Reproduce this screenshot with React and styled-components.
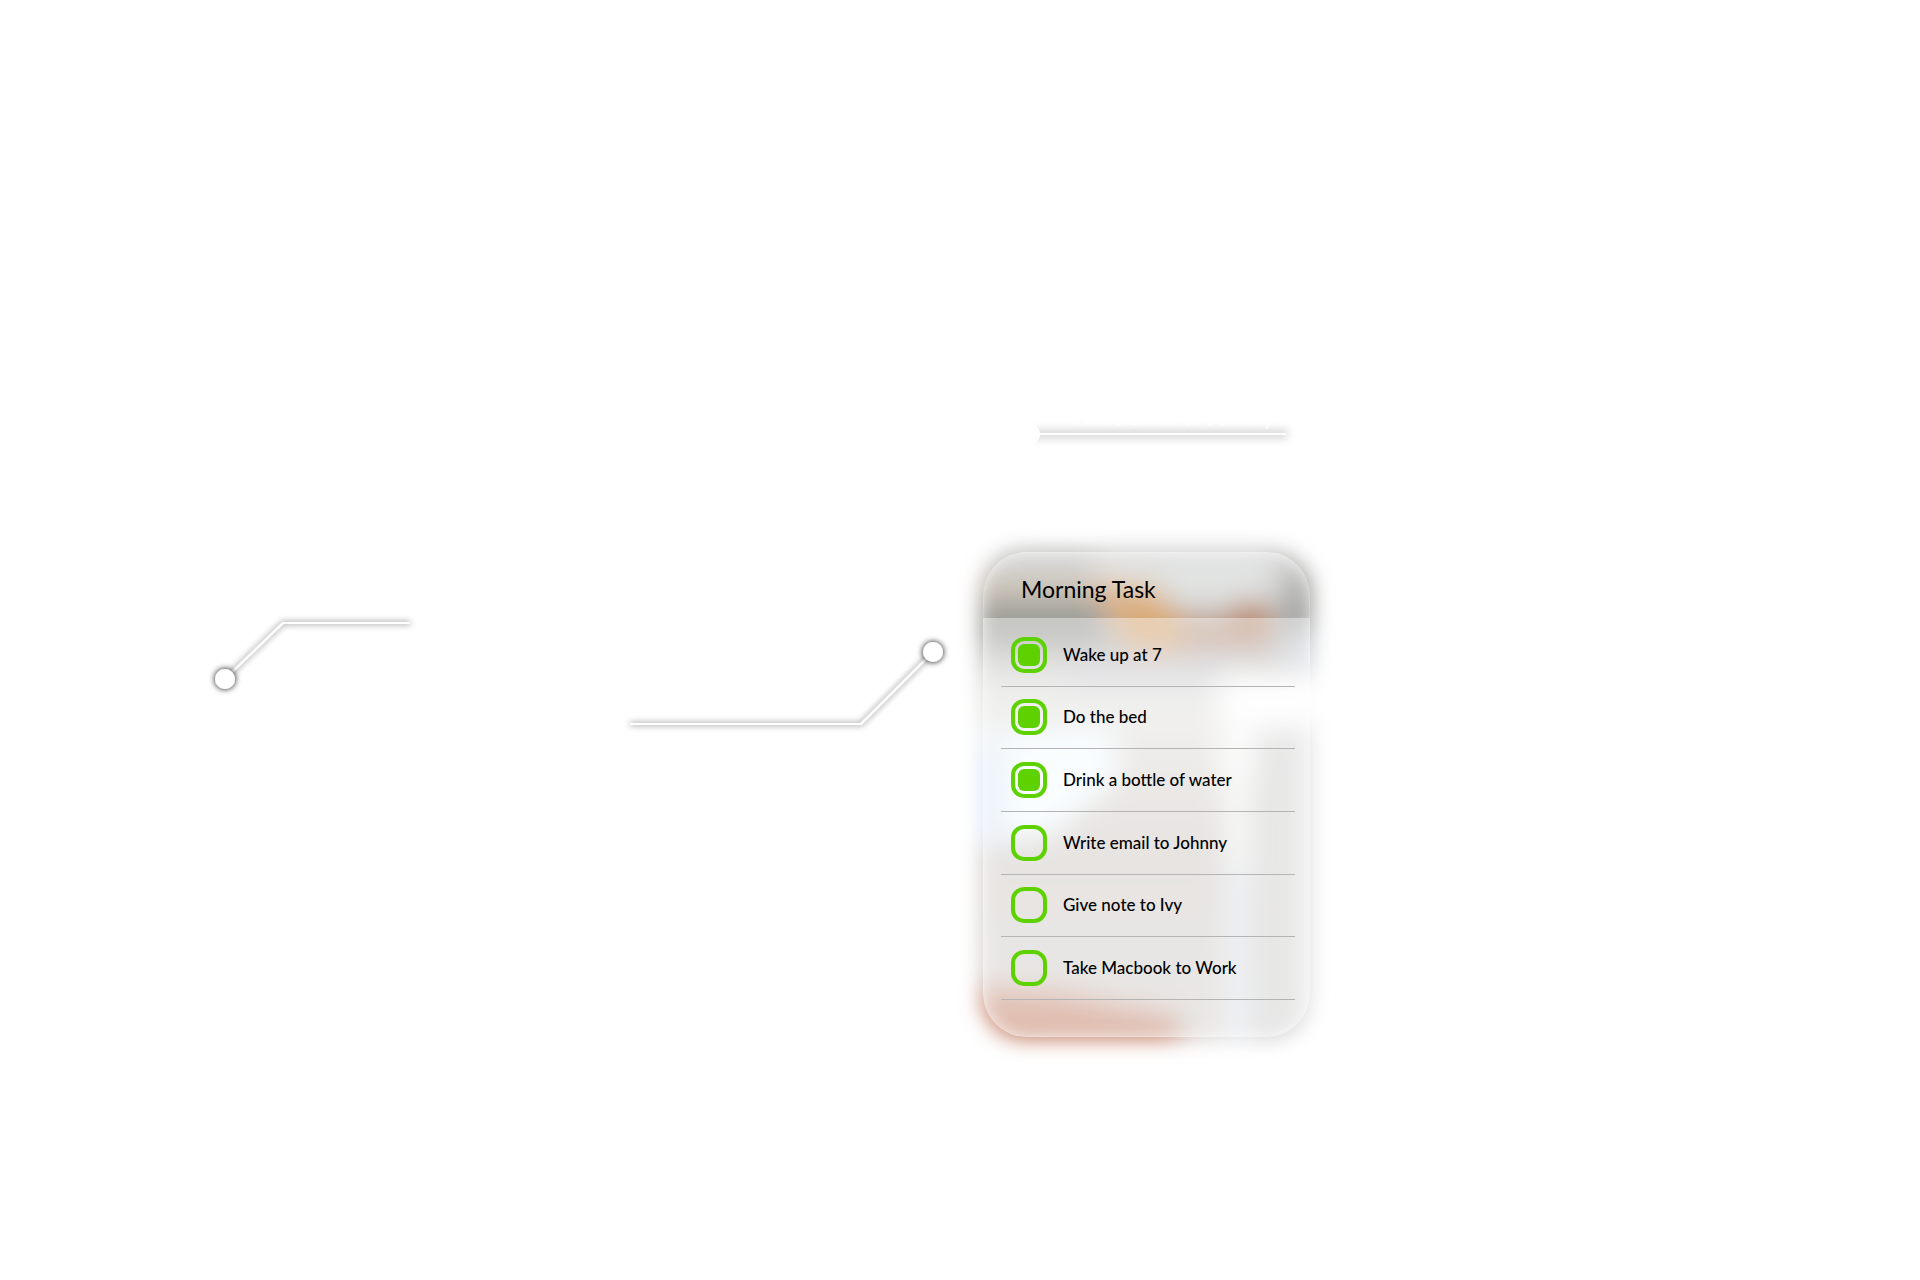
import React, { useState } from "react";
import styled, { createGlobalStyle } from "styled-components";

const GlobalStyle = createGlobalStyle`
  *, *::before, *::after { box-sizing: border-box; }
  body {
    margin: 0;
    background: #fff;
    color: #000;
    font-family: Lato, "Open Sans", sans-serif;
  }
`;

const Page = styled.main`
  display: grid;
  grid-template-columns: 440fr 543fr 937fr;
  align-items: start;
  min-height: 100vh;
`;

const Connector = styled.svg`
  display: block;
  justify-self: end;
  margin-top: ${(p) => p.$top}px;
`;

const Column = styled.div`
  display: flex;
  flex-direction: column;
  align-items: flex-start;
  padding-top: 400px;
`;

const Reminder = styled.div`
  display: grid;
  width: 100%;
  max-width: 340px;
  height: 60px;
  margin-bottom: 92px;

  > * { grid-area: 1 / 1; }
`;

const ReminderText = styled.p`
  z-index: 1;
  margin: 0;
  padding-left: 88px;
  font-size: 21px;
  line-height: 34px;
  color: #fff;
  white-space: nowrap;
`;

const Panel = styled.section`
  position: relative;
  width: 100%;
  max-width: 327px;
`;

const Backdrop = styled.svg`
  position: absolute;
  left: -60px;
  top: -60px;
`;

const Glass = styled.div`
  position: relative;
  overflow: hidden;
  border-radius: 44px;

  &::after {
    content: "";
    position: absolute;
    inset: 0;
    border-radius: 44px;
    box-shadow: inset 0 0 18px rgba(255, 255, 255, 0.15), inset 0 0 1px 1px rgba(255, 255, 255, 0.15);
    pointer-events: none;
  }
`;

const Header = styled.header`
  display: flex;
  align-items: center;
  height: 66px;
  padding: 8px 38px 0;
  background: linear-gradient(rgba(255, 255, 255, 0.4), rgba(255, 255, 255, 0));
`;

const Title = styled.h1`
  margin: 0;
  font-size: 23px;
  font-weight: 400;
  line-height: 32px;
`;

const Tasks = styled.ul`
  display: grid;
  grid-template-rows: repeat(6, 1fr);
  height: 419px;
  margin: 0;
  padding: 6px 15px 37px 18px;
  list-style: none;
  background: rgba(255, 255, 255, 0.42);
`;

const Task = styled.li`
  display: flex;
  border-bottom: 1px solid #b4b4b4;
`;

const TaskLabel = styled.label`
  display: flex;
  flex: 1;
  align-items: center;
  gap: 16px;
  padding-left: 10px;
  font-size: 17px;
  font-weight: 500;
  line-height: 24px;
  white-space: nowrap;
  cursor: pointer;
`;

const Check = styled.input`
  appearance: none;
  flex: none;
  width: 36px;
  height: 36px;
  margin: 0;
  padding: 3px;
  border: 4px solid #5dd200;
  border-radius: 13px;
  background-clip: content-box;
  cursor: pointer;

  &:checked { background-color: #5dd200; }
`;

const initialTasks = [
  { text: "Wake up at 7", done: true },
  { text: "Do the bed", done: true },
  { text: "Drink a bottle of water", done: true },
  { text: "Write email to Johnny", done: false },
  { text: "Give note to Ivy", done: false },
  { text: "Take Macbook to Work", done: false },
];

function Shadow({ id, deviation, opacity }) {
  return (
    <filter id={id} filterUnits="userSpaceOnUse" x="0" y="0" width="400" height="140">
      <feDropShadow dx="0" dy="0" stdDeviation={deviation} floodColor="#000" floodOpacity={opacity} />
    </filter>
  );
}

function Scenery() {
  return (
    <Backdrop width="447" height="605" viewBox="-60 -60 447 605" aria-hidden="true">
      <defs>
        <filter id="haze" filterUnits="userSpaceOnUse" x="-60" y="-60" width="447" height="605">
          <feGaussianBlur stdDeviation="10" />
        </filter>
        <filter id="edge" filterUnits="userSpaceOnUse" x="-60" y="-60" width="447" height="605">
          <feGaussianBlur stdDeviation="10" />
        </filter>
        <clipPath id="frame">
          <rect x="-3" y="-3" width="333" height="491" rx="44" />
        </clipPath>
        <linearGradient id="wall" x1="0" y1="0" x2="0" y2="1">
          <stop offset="0" stopColor="#bfc0be" />
          <stop offset="0.14" stopColor="#c2c3c1" />
          <stop offset="0.2" stopColor="#b8b7b3" />
          <stop offset="0.27" stopColor="#e0e0e0" />
          <stop offset="0.34" stopColor="#e6e5e2" />
          <stop offset="0.6" stopColor="#d6d0cc" />
          <stop offset="1" stopColor="#dad8d4" />
        </linearGradient>
      </defs>
      <g filter="url(#edge)">
        <g clipPath="url(#frame)">
          <g filter="url(#haze)">
            <rect x="-60" y="-60" width="447" height="605" fill="#b8b9b7" />
            <rect x="-60" y="0" width="447" height="485" fill="url(#wall)" />
            <rect x="-60" y="485" width="447" height="60" fill="#dad8d4" />
            <rect x="110" y="4" width="180" height="56" fill="#d9dbda" />
            <rect x="-60" y="48" width="180" height="44" fill="#9c9d98" />
            <rect x="-60" y="26" width="180" height="20" fill="#c3b5a2" />
            <rect x="300" y="14" width="87" height="66" fill="#a2a3a0" />
            <path d="M104 28 L170 32 L200 62 L198 104 L146 100 Z" fill="#d9aa78" />
            <rect x="196" y="60" width="94" height="40" fill="#be9e8b" />
            <ellipse cx="268" cy="66" rx="22" ry="18" fill="#b98566" />
            <rect x="90" y="108" width="150" height="22" fill="#cbccd2" />
            <rect x="300" y="84" width="87" height="34" fill="#cdd2da" />
            <path d="M236 124 H387 V160 L290 180 L262 240 H240 Z" fill="#ffffff" />
            <rect x="244" y="160" width="22" height="180" fill="#f6f9f7" />
            <rect x="272" y="176" width="54" height="369" fill="#d6d5d4" />
            <rect x="318" y="180" width="69" height="365" fill="#ebebec" />
            <path d="M-60 184 L130 176 L134 226 L70 282 L-60 298 Z" fill="#f4fcff" />
            <rect x="-60" y="190" width="80" height="104" fill="#dde7f5" />
            <rect x="244" y="310" width="20" height="235" fill="#e6ebf4" />
            <path d="M-60 430 L80 440 L200 464 V545 H-60 Z" fill="#cd937b" />
            <rect x="-60" y="480" width="256" height="65" fill="#bd7356" />
          </g>
        </g>
      </g>
    </Backdrop>
  );
}

export default function App() {
  const [tasks, setTasks] = useState(initialTasks);
  const toggle = (index) =>
    setTasks(tasks.map((t, i) => (i === index ? { ...t, done: !t.done } : t)));

  return (
    <>
      <GlobalStyle />
      <Page>
        <Connector $top={600} width="240" height="100" viewBox="0 0 240 100" aria-hidden="true">
          <defs>
            <Shadow id="lineA" deviation="3" opacity="0.7" />
            <Shadow id="dotA" deviation="3" opacity="1" />
          </defs>
          <path d="M27 77 L83 23 H210" fill="none" stroke="#fff" strokeWidth="2" filter="url(#lineA)" />
          <circle cx="25" cy="79" r="10" fill="#fff" filter="url(#dotA)" />
        </Connector>
        <Connector $top={620} width="383" height="130" viewBox="0 0 383 130" aria-hidden="true">
          <defs>
            <Shadow id="lineB" deviation="3" opacity="0.7" />
            <Shadow id="dotB" deviation="3" opacity="1" />
          </defs>
          <path d="M30 104 H261 L331 34" fill="none" stroke="#fff" strokeWidth="2" filter="url(#lineB)" />
          <circle cx="333" cy="32" r="10" fill="#fff" filter="url(#dotB)" />
        </Connector>
        <Column>
          <Reminder>
            <svg width="340" height="60" viewBox="0 0 340 60" aria-hidden="true">
              <defs>
                <filter id="soft" filterUnits="userSpaceOnUse" x="0" y="0" width="340" height="60">
                  <feGaussianBlur stdDeviation="4" />
                </filter>
                <clipPath id="lower">
                  <rect x="0" y="21" width="340" height="39" />
                </clipPath>
              </defs>
              <g clipPath="url(#lower)">
                <rect x="47" y="30" width="257" height="8" fill="#000" fillOpacity="0.19" filter="url(#soft)" />
              </g>
              <rect x="40" y="33" width="263" height="2" fill="#fff" />
              <rect x="20" y="20" width="28" height="28" fill="#fff" />
              <circle cx="46" cy="34" r="11" fill="#fff" />
            </svg>
            <ReminderText>Write Email to Johnny</ReminderText>
          </Reminder>
          <Panel>
            <Scenery />
            <Glass>
              <Header>
                <Title>Morning Task</Title>
              </Header>
              <Tasks>
                {tasks.map((task, i) => (
                  <Task key={task.text}>
                    <TaskLabel>
                      <Check type="checkbox" checked={task.done} onChange={() => toggle(i)} />
                      {task.text}
                    </TaskLabel>
                  </Task>
                ))}
              </Tasks>
            </Glass>
          </Panel>
        </Column>
      </Page>
    </>
  );
}
